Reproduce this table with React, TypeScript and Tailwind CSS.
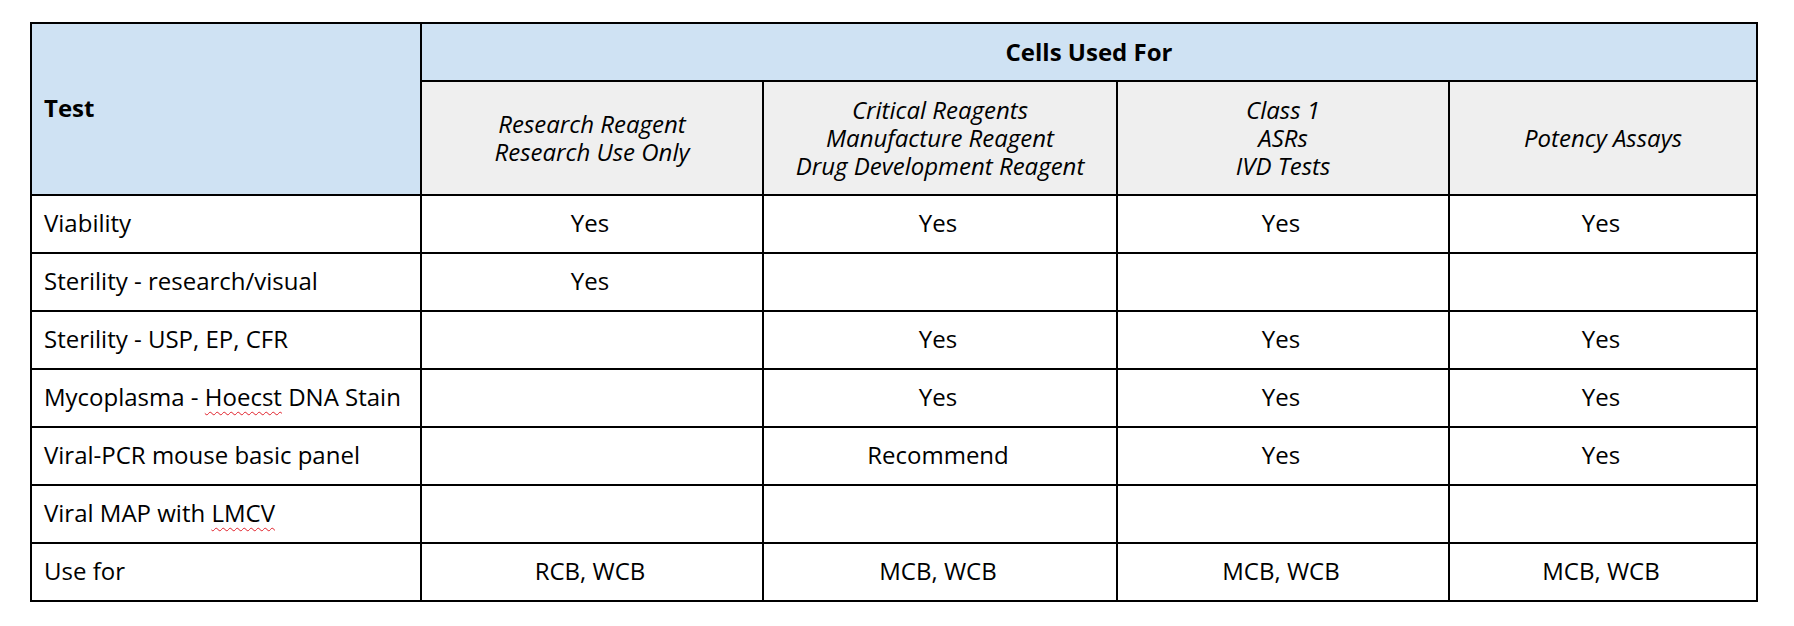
import React from "react";

const rows: { test: React.ReactNode; vals: string[] }[] = [
  { test: "Viability", vals: ["Yes", "Yes", "Yes", "Yes"] },
  { test: "Sterility - research/visual", vals: ["Yes", "", "", ""] },
  { test: "Sterility - USP, EP, CFR", vals: ["", "Yes", "Yes", "Yes"] },
  {
    test: (
      <>
        Mycoplasma -{" "}
        <span className="underline decoration-wavy decoration-[#e0202a] decoration-1 underline-offset-[5px]">Hoecst</span> DNA Stain
      </>
    ),
    vals: ["", "Yes", "Yes", "Yes"],
  },
  { test: "Viral-PCR mouse basic panel", vals: ["", "Recommend", "Yes", "Yes"] },
  {
    test: (
      <>
        Viral MAP with{" "}
        <span className="underline decoration-wavy decoration-[#e0202a] decoration-1 underline-offset-[5px]">LMCV</span>
      </>
    ),
    vals: ["", "", "", ""],
  },
  { test: "Use for", vals: ["RCB, WCB", "MCB, WCB", "MCB, WCB", "MCB, WCB"] },
];

const subHeads = [
  ["Research Reagent", "Research Use Only"],
  ["Critical Reagents", "Manufacture Reagent", "Drug Development Reagent"],
  ["Class 1", "ASRs", "IVD Tests"],
  ["Potency Assays"],
];

export default function App() {
  return (
    <div className="min-h-[626px] w-[1794px] bg-white pl-[30px] pt-[22px] text-black font-['Open_Sans',sans-serif] text-[24px]">
      <div className="grid w-[1728px] grid-cols-[388px_340px_352px_330px_306px] grid-rows-[56px_112px_repeat(7,56px)] gap-[2px] bg-black p-[2px]">
        <div className="row-span-2 flex items-center bg-[#cfe2f3] pb-[2px] pl-[12px] font-bold">Test</div>
        <div className="col-span-4 flex items-center justify-center bg-[#cfe2f3] pb-[1px] font-bold">Cells Used For</div>
        {subHeads.map((lines, i) => (
          <div key={i} className="flex flex-col items-center justify-center bg-[#efefef] pb-[1px] italic leading-[28px]">
            {lines.map((l) => (
              <span key={l} className="block h-[28px]">{l}</span>
            ))}
          </div>
        ))}
        {rows.map((r, i) => (
          <React.Fragment key={i}>
            <div className="flex items-center bg-white pb-[2px] pl-[12px]">
              <span>{r.test}</span>
            </div>
            {r.vals.map((v, j) => (
              <div key={j} className="flex items-center justify-center bg-white pb-[2px] pr-[4px]">
                {v}
              </div>
            ))}
          </React.Fragment>
        ))}
      </div>
    </div>
  );
}
